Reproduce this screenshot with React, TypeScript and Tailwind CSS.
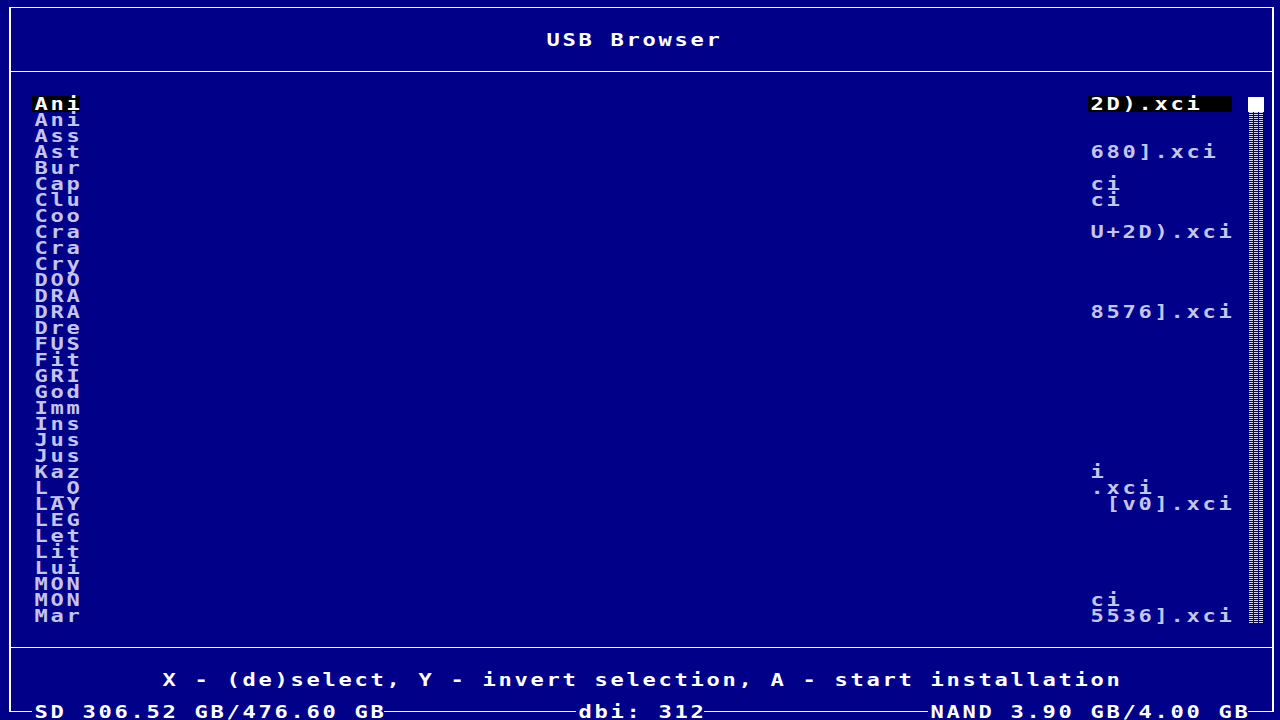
import React from "react";

const rows: [string, string][] = [
  ["Ani", "2D).xci  "],
  ["Ani", ""],
  ["Ass", ""],
  ["Ast", "680].xci"],
  ["Bur", ""],
  ["Cap", "ci"],
  ["Clu", "ci"],
  ["Coo", ""],
  ["Cra", "U+2D).xci"],
  ["Cra", ""],
  ["Cry", ""],
  ["DOO", ""],
  ["DRA", ""],
  ["DRA", "8576].xci"],
  ["Dre", ""],
  ["FUS", ""],
  ["Fit", ""],
  ["GRI", ""],
  ["God", ""],
  ["Imm", ""],
  ["Ins", ""],
  ["Jus", ""],
  ["Jus", ""],
  ["Kaz", "i"],
  ["L_O", ".xci"],
  ["LAY", " [v0].xci"],
  ["LEG", ""],
  ["Let", ""],
  ["Lit", ""],
  ["Lui", ""],
  ["MON", ""],
  ["MON", "ci"],
  ["Mar", "5536].xci"],
];

// one text cell is 16x16, like the console grid
function Cells({ text, className = "" }: { text: string; className?: string }) {
  return (
    <div
      className={`h-4 shrink-0 whitespace-pre ${className}`}
      style={{ width: text.length * 16 }}
    >
      <span className="inline-block origin-left -translate-y-[3px] scale-x-[1.3] pl-[2px] text-[17px] leading-4 tracking-[2.07px]">
        {text}
      </span>
    </div>
  );
}

function Line({ className = "" }: { className?: string }) {
  return <div className={`mt-[7px] h-px bg-white ${className}`} />;
}

export default function App() {
  return (
    <div className="h-[720px] w-[1280px] overflow-hidden bg-[#000088] pl-[9px] pr-[6px] pt-[7px] font-['DejaVu_Sans_Mono',monospace] font-bold text-white">
      <div className="flex h-[705px] flex-col border-x-2 border-t border-white">
        <div className="h-[64px] shrink-0 border-b border-white pl-[533px] pt-[24px]">
          <Cells text="USB Browser" />
        </div>

        <div className="flex h-[576px] shrink-0 border-b border-white pl-[21px] pr-[8px] pt-[24px]">
          <div className="mr-4 flex flex-1 flex-col">
            {rows.map(([left, right], i) => (
              <div key={i} className="flex h-4 justify-between">
                <Cells
                  text={left}
                  className={i === 0 ? "bg-black text-white" : "text-[#c4c4ec]"}
                />
                <div className="w-[144px]">
                  {right && (
                    <Cells
                      text={right}
                      className={i === 0 ? "bg-black text-white" : "text-[#c4c4ec]"}
                    />
                  )}
                </div>
              </div>
            ))}
          </div>
          <div className="flex w-4 flex-col">
            <div className="mt-px h-[15px] bg-white" />
            <svg width="16" height="512" className="block">
              <defs>
                <pattern id="shade" width="16" height="2" patternUnits="userSpaceOnUse">
                  <rect x="1" y="0" width="4" height="1" fill="#d4d4f0" />
                  <rect x="6" y="0" width="4" height="1" fill="#d4d4f0" />
                  <rect x="11" y="0" width="4" height="1" fill="#d4d4f0" />
                </pattern>
              </defs>
              <rect width="16" height="512" fill="url(#shade)" />
            </svg>
          </div>
        </div>

        <div className="h-[56px] shrink-0 pl-[149px] pt-[24px]">
          <Cells text="X - (de)select, Y - invert selection, A - start installation" />
        </div>

        <div className="flex h-4 shrink-0">
          <Line className="w-[21px]" />
          <Cells text="SD 306.52 GB/476.60 GB" />
          <Line className="w-[192px]" />
          <Cells text="dbi: 312" />
          <Line className="w-[224px]" />
          <Cells text="NAND 3.90 GB/4.00 GB" />
          <Line className="flex-1" />
        </div>
      </div>
    </div>
  );
}
